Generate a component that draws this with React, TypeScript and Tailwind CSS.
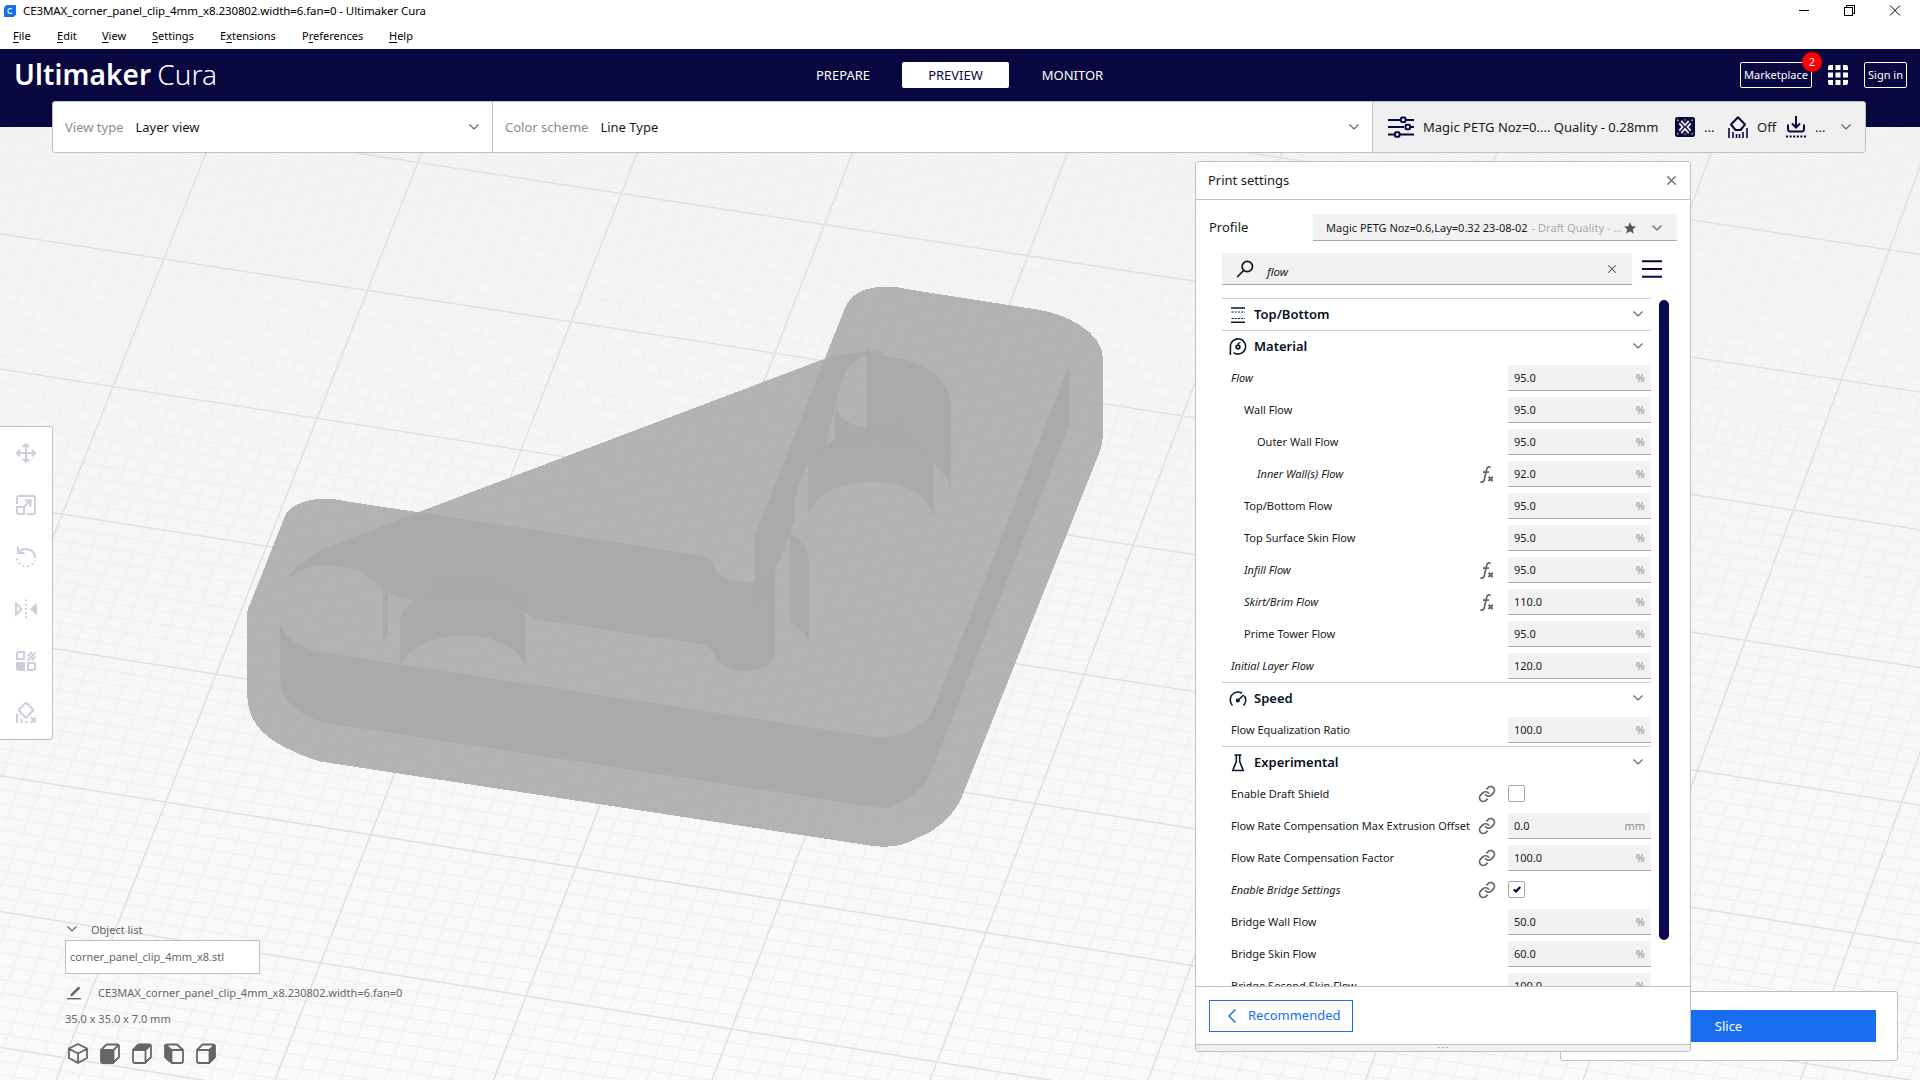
import React from "react";
import { Link } from "lucide-react";

type P = [number, number];

const corner00: P = [163.8, 259];
const corner10: P = [1997, 541.5];
const corner01: P = [-141, 1024.5];
const corner11: P = [1711, 1324.5];

/* Maps build plate coordinates (in 10 mm squares) to the screen. */
function project(i: number, j: number): P {
  const u = i / 9;
  const v = (j - 1) / 6;
  const f = (k: 0 | 1) =>
    corner00[k] * (1 - u) * (1 - v) + corner10[k] * u * (1 - v) + corner01[k] * (1 - u) * v + corner11[k] * u * v;
  return [f(0), f(1)];
}

function gridPath(major: boolean): string {
  let d = "";
  const seg = (a: P, b: P) => {
    d += `M${a[0].toFixed(1)},${a[1].toFixed(1)}L${b[0].toFixed(1)},${b[1].toFixed(1)}`;
  };
  for (let n = -20; n <= 130; n++) {
    if ((n % 10 === 0) === major) seg(project(n / 10, -5), project(n / 10, 10));
  }
  for (let n = -50; n <= 100; n++) {
    if ((n % 10 === 0) === major) seg(project(-2, n / 10), project(13, n / 10));
  }
  return d;
}

const outline =
  "M1135,44 Q1160,42 1180,50 L1405,103 C1460,115 1521,165 1521,232 L1521,425 Q1521,450 1514,480 L1277,1370 Q1262,1430 1218,1470 L1175,1500 Q1148,1512 1115,1504 L155,1284 Q125,1270 98,1249 Q30,1200 30,1110 L30,900 Q30,885 37,865 L96,642 C105,612 135,598 165,598 Q185,598 200,604 L328,633 L1036,232 L1072,98 C1080,65 1105,46 1135,44Z";
const walls = [
  "M87,920 C92,955 115,982 150,997 L1110,1218 C1160,1230 1205,1205 1225,1150 L1462,250 L1462,405 L1222,1310 C1215,1345 1195,1370 1170,1390 C1150,1405 1145,1408 1125,1404 L165,1183 C150,1178 138,1168 125,1157 C100,1135 87,1105 87,1065Z",
  "M98,810 C110,780 135,750 165,728 L328,633 L820,746 C835,751 840,762 842,775 C850,800 870,816 895,815 L915,815 L950,785 L950,1000 C950,1025 925,1049 895,1048 C870,1048 848,1030 841,1000 C836,985 828,981 820,978 L545,915 C530,911 522,903 510,893 Q516,905 516,920 L516,1043 C505,985 460,955 408,955 C355,955 310,985 297,1035 L297,915 C298,895 308,875 321,864 Q307,862 292,854 C285,850 275,842 268,832 L222,782 L180,772 C150,767 118,780 98,810Z",
  "M267,830 L275,838 L275,948 L267,980Z",
  "M1036,232 C1060,218 1100,212 1143,214 L1108,222 C1080,238 1068,270 1060,320 C1055,360 1048,400 1038,455 L1012,490 C1000,530 984,580 984,610 L984,655 L950,785 L915,915 L915,690Z",
  "M1108,203 L1114,212 L1143,214 L1128,222 C1195,230 1256,275 1256,350 L1256,580 C1253,545 1242,525 1226,506 L1226,643 C1215,585 1175,553 1118,553 C1060,553 1015,590 1007,643 L1007,500 L1038,455 L1054,445 L1054,360 C1062,390 1080,410 1108,413Z",
  "M976,690 C998,703 1009,735 1009,765 L1009,980 C1003,950 992,932 976,920Z",
];
const innerWalls = [
  "M1054,360 C1062,390 1085,412 1118,412 C1150,412 1172,395 1180,372 L1180,435 C1205,455 1220,480 1226,506 C1210,475 1170,455 1118,455 C1080,458 1040,470 1007,500 L1038,455 L1054,445Z",
  "M345,765 L345,800 C370,793 440,790 470,805 L470,770 L470,825 L525,845 L510,893 C500,870 480,862 460,868 L345,868 L321,864 L345,850Z",
];

function BuildPlate() {
  return (
    <svg className="absolute inset-0" width="1920" height="1080" viewBox="0 0 1920 1080">
      <defs>
        <linearGradient id="sky" x1="0" y1="0" x2="0" y2="1">
          <stop offset="0" stopColor="#f2f2f2" />
          <stop offset="1" stopColor="#fafafa" />
        </linearGradient>
      </defs>
      <rect width="1920" height="1080" fill="url(#sky)" />
      <path d={gridPath(false)} stroke="#f0f0f0" strokeWidth="1.3" fill="none" />
      <path d={gridPath(true)} stroke="#e0e0e0" strokeWidth="1.5" fill="none" />
      <g transform="matrix(0.57398 0 0 0.38265 230 270)" fill="#a9a9a9" fillOpacity="0.87" shapeRendering="crispEdges">
        <path d={outline} />
        {walls.map((d) => (
          <path key={d} d={d} />
        ))}
        {innerWalls.map((d) => (
          <path key={d} d={d} />
        ))}
      </g>
    </svg>
  );
}

function Chevron({ className = "", color = "#666" }: { className?: string; color?: string }) {
  return (
    <svg className={className} width="10" height="6" viewBox="0 0 10 6" fill="none" stroke={color} strokeWidth="1.2">
      <path d="M0.5 0.5 5 5 9.5 0.5" />
    </svg>
  );
}

function Cross({ size = 8 }: { size?: number }) {
  return (
    <svg width={size} height={size} viewBox="0 0 8 8" stroke="#666" strokeWidth="1.1">
      <path d="M0.3 0.3 7.7 7.7M7.7 0.3 0.3 7.7" />
    </svg>
  );
}

function TitleBar() {
  return (
    <div className="flex h-[22px] items-center justify-between bg-white text-[11.5px] leading-[22px] text-black">
      <div className="flex items-center">
        <svg className="ml-1 mr-[7px]" width="12" height="12" viewBox="0 0 12 12">
          <path d="M2.5 0H12V9.5L9.5 12H0V2.5Z" fill="#196ef0" />
          <path d="M8 4.2C7.2 3.2 3.9 3 3.9 6S7.2 8.8 8 7.8" fill="none" stroke="#fff" strokeWidth="1.1" />
        </svg>
        <span className="tracking-[-0.09px]">CE3MAX_corner_panel_clip_4mm_x8.230802.width=6.fan=0 - Ultimaker Cura</span>
      </div>
      <svg className="mr-[19px] mt-[-2px]" width="102" height="11" viewBox="0 0 102 11" fill="none" stroke="#000" shapeRendering="crispEdges">
        <path d="M0 5.5H10" />
        <path d="M45.5 2.5H53.5V10.5H45.5ZM47.5 2.5V0.5H55.5V8.5H53.5" />
        <path d="M91 0.5 101 10.5M101 0.5 91 10.5" shapeRendering="auto" />
      </svg>
    </div>
  );
}

const menus: [string, string, string, string][] = [
  ["", "F", "ile", "w-[44px]"],
  ["", "E", "dit", "w-[45px]"],
  ["", "V", "iew", "w-[50px]"],
  ["", "S", "ettings", "w-[68px]"],
  ["E", "x", "tensions", "w-[82px]"],
  ["P", "r", "eferences", "w-[87px]"],
  ["", "H", "elp", "w-[40px]"],
];

function MenuBar() {
  return (
    <div className="flex h-[27px] bg-white pl-[13px] text-[11px] leading-[28px] text-black">
      {menus.map(([a, u, b, w]) => (
        <span key={u + b} className={w}>
          {a}
          <span className="underline underline-offset-2">{u}</span>
          {b}
        </span>
      ))}
    </div>
  );
}

function Header() {
  return (
    <div className="relative flex h-[78px] items-start bg-[#08073f] text-white">
      <div className="flex h-[49px] w-[789px] items-center pl-[14px] text-[28px] leading-[48px]">
        <span className="font-semibold tracking-[0.1px]">Ultimaker</span>
        <span className="ml-[6px] font-light">Cura</span>
      </div>
      <div className="mt-[13px] flex h-[26px] text-[13px] leading-[26px]">
        <span className="w-[113px] text-center">
          <span className="ml-[-5px]">PREPARE</span>
        </span>
        <span className="w-[107px] rounded-[2px] bg-white text-center text-[#08073f]">PREVIEW</span>
        <span className="w-[127px] text-center">MONITOR</span>
      </div>
      <div className="ml-auto mr-[13px] mt-[13px] flex h-[26px] items-center text-[11px] leading-[24px]">
        <span className="relative h-[26px] w-[72px] rounded-[2px] border border-white text-center">
          Marketplace
          <span className="absolute -right-[11px] -top-[11px] h-5 w-5 rounded-full bg-[#ff0000] text-center leading-5">2</span>
        </span>
        <svg className="ml-4 mr-4" width="20" height="20" viewBox="0 0 20 20" fill="#fff">
          <path d="M2 0H5V5H0V2Q0 0 2 0M7.5 0H12.5V5H7.5ZM15 0H18Q20 0 20 2V5H15ZM0 7.5H5V12.5H0ZM7.5 7.5H12.5V12.5H7.5ZM15 7.5H20V12.5H15ZM0 15H5V20H2Q0 20 0 18ZM7.5 15H12.5V20H7.5ZM15 15H20V18Q20 20 18 20H15Z" />
        </svg>
        <span className="h-[26px] w-[43px] rounded-[2px] border border-white text-center">Sign in</span>
      </div>
    </div>
  );
}

function Sliders() {
  return (
    <svg width="26" height="22" viewBox="0 0 26 22" fill="none" stroke="#08073f" strokeWidth="2">
      <path d="M0 4H12M18 4H26M0 11H16M22 11H26M0 18.5H6M12 18.5H26" />
      <rect x="13" y="1.5" width="4.5" height="4.5" rx="1" />
      <rect x="17.5" y="8.8" width="4.5" height="4.5" rx="1" />
      <rect x="7" y="16.2" width="4.5" height="4.5" rx="1" />
    </svg>
  );
}

function ConfigBar() {
  return (
    <div className="absolute left-[52px] top-[101px] flex h-[52px] w-[1814px] items-center overflow-hidden rounded-[3px] border border-[#c0c0c0] bg-white text-[13px] text-[#191919]">
      <div className="flex h-full w-[440px] items-center border-r border-[#c0c0c0] pl-3">
        <span className="mt-px text-[#8c8c8c]">View type</span>
        <span className="ml-3 mt-px">Layer view</span>
        <Chevron className="ml-auto mr-[13px]" />
      </div>
      <div className="flex h-full w-[880px] items-center border-r border-[#c0c0c0] pl-3">
        <span className="mt-px text-[#8c8c8c]">Color scheme</span>
        <span className="ml-3 mt-px">Line Type</span>
        <Chevron className="ml-auto mr-[13px]" />
      </div>
      <div className="flex h-full flex-1 items-center bg-[#f0f0f0] pl-[15px]">
        <Sliders />
        <span className="ml-[9px] mt-px w-[252px] whitespace-nowrap">Magic PETG Noz=0.... Quality - 0.28mm</span>
        <svg width="20" height="20" viewBox="0 0 20 20">
          <rect width="20" height="20" rx="2.5" fill="#08073f" />
          <path d="M6.300 3.800 10 8.200 13.700 3.800M6.300 16.200 10 11.800 13.700 16.200" fill="none" stroke="#f0f0f0" strokeWidth="1.800" />
          <path d="M4.300 6.300 7.500 10 4.300 13.700M15.700 6.300 12.500 10 15.700 13.700" fill="none" stroke="#f0f0f0" strokeWidth="1.800" />
          <path d="M2 2.500H3.500V4H2ZM16.500 2.500H18V4H16.500ZM2 16H3.500V17.500H2ZM16.500 16H18V17.500H16.500ZM9.300 2.200H10.700V3.600H9.300ZM9.300 16.400H10.700V17.800H9.300Z" fill="#b9b9c8" />
        </svg>
        <span className="ml-[9px] mt-px w-[24px]">...</span>
        <svg width="20" height="22" viewBox="0 0 20 22" fill="none" stroke="#08073f" strokeWidth="2">
          <path d="M10 1.2 17 8.5 12.5 14H7.5L3 8.5Z" strokeLinejoin="round" />
          <path d="M1 12V22M5 16V22M8.5 18V22M11.5 18V22M15 16V22M19 12V22" strokeWidth="1.6" />
        </svg>
        <span className="ml-[9px] mt-px w-[29px]">Off</span>
        <svg width="20" height="22" viewBox="0 0 20 22" fill="none" stroke="#08073f" strokeWidth="2">
          <path d="M10 0V11M6 7.5 10 11.5 14 7.5M2 8.5V13Q2 15.5 4.5 15.5H15.5Q18 15.5 18 13V8.5" />
          <path d="M0 20.5H20" strokeDasharray="2 1.6" />
        </svg>
        <span className="ml-[9px] mt-px">...</span>
        <Chevron className="ml-auto mr-[14px]" />
      </div>
    </div>
  );
}

function ToolIcons() {
  const base = { width: 20, height: 20, viewBox: "0 0 20 20", fill: "none", stroke: "#cfcddc", strokeWidth: 2 };
  return (
    <>
      <svg {...base}>
        <path d="M10 1V19M1 10H19M6.8 4 10 1 13.2 4M6.8 16 10 19 13.2 16M4 6.8 1 10 4 13.2M16 6.8 19 10 16 13.2" />
      </svg>
      <svg {...base}>
        <path d="M1 9V3Q1 1 3 1H17Q19 1 19 3V17Q19 19 17 19H11M1 12H8V19H3Q1 19 1 17ZM8 12 15 5M9 5.5H14.5V12" />
      </svg>
      <svg {...base}>
        <path d="M2 0V6H8.5M2.5 5.8C7 -0.5 19 1.5 19 11" />
        <path d="M1 11.5C2 21.5 17 22 18.5 13" strokeDasharray="1.8 3" />
      </svg>
      <svg {...base} width={22} viewBox="0 0 22 20">
        <path d="M1 4.5V15.5L6.5 10Z" />
        <path d="M22 3.5V16.5L15 10Z" fill="#cfcddc" stroke="none" />
        <path d="M11 0.5V20" strokeDasharray="1.8 2.4" />
      </svg>
      <svg {...base}>
        <path d="M3 1H8V8H1V3Q1 1 3 1M12 12H19V17Q19 19 17 19H12ZM11.5 5.5 16 0.8M11.5 9.5 19.5 1.5M15.5 9.5 19.5 5.5" />
        <path d="M0 11H9V20H3Q0 20 0 17Z" fill="#cfcddc" stroke="none" />
      </svg>
      <svg {...base} className="-mt-px" height={21} viewBox="0 0 20 21">
        <path d="M10 1Q10.500 1 11 1.500L17 7.500Q17.500 8 17 8.500L11 15Q10 16 9 15L3 8.500Q2.500 8 3 7.500L9 1.500Q9.500 1 10 1" />
        <path d="M1 11.500V21M5.500 17V21M10 19V21M15 15.500 20 20.500M20 15.500 15 20.500" />
      </svg>
    </>
  );
}

function Toolbar() {
  return (
    <div className="absolute -left-[3px] top-[426px] flex h-[314px] w-[56px] flex-col items-center rounded-[3px] border border-[#c0c0c0] bg-white">
      <div className="grid auto-rows-[52px] place-items-center pl-[1px]">
        <ToolIcons />
      </div>
    </div>
  );
}

const viewFaces = [
  "",
  "M1 6H14V20H1Z",
  "M1 6 6 1H19L14 6Z",
  "M1 1 7 6V19H5L1 15Z",
  "M14 6 19 1V15L14 20Z",
];

function ViewIcon({ index }: { index: number }) {
  return (
    <svg width="20" height="21" viewBox="0 0 20 21" fill="none" stroke="#666" strokeWidth="2" strokeLinejoin="round">
      {index === 0 ? (
        <path d="M10 1 19 5.500V15L10 20 1 15V5.500ZM1.500 6 10 10.500 18.500 6M10 10.500V20" strokeWidth="1.800" />
      ) : (
        <>
          <path d={viewFaces[index]} fill="#666" stroke="none" />
          {index === 3 ? (
            <path d="M19 7V18Q19 20 17 20H8L1 14V2L3 1.500H13L19 7H7.500V20M1.500 2 7.500 7" strokeWidth="1.800" />
          ) : (
            <path d="M1 7V18Q1 20 3 20H13L19 14V3Q19 1.500 17 1.500H6.500L1 7H13.500V20M13.500 7 18.500 2" strokeWidth="1.800" />
          )}
        </>
      )}
    </svg>
  );
}

function ObjectList() {
  return (
    <div className="absolute left-[65px] top-[920px] flex w-[400px] flex-col text-[11px] text-[#666]">
      <div className="flex h-5 items-center">
        <Chevron className="ml-[2px] mr-[14px] mt-[-3px]" />
        Object list
      </div>
      <div className="h-[34px] w-[195px] border border-[#c0c0c0] bg-white pl-1 leading-[32px]">corner_panel_clip_4mm_x8.stl</div>
      <div className="mt-[9px] flex h-5 items-center">
        <svg className="ml-[2px] mr-[17px]" width="14" height="14" viewBox="0 0 14 14" fill="#666">
          <path d="M11.500 0.500 13.300 2.200 6 9.500 3.500 10.500 3.800 8Z" />
          <path d="M0 12H14V13.400H0Z" />
        </svg>
        CE3MAX_corner_panel_clip_4mm_x8.230802.width=6.fan=0
      </div>
      <div className="mt-[6px] h-5 leading-5">35.0 x 35.0 x 7.0 mm</div>
      <div className="ml-[3px] mt-[14px] flex gap-3">
        {viewFaces.map((_, i) => (
          <ViewIcon key={i} index={i} />
        ))}
      </div>
    </div>
  );
}

type Row =
  | { kind: "cat"; name: string }
  | { kind: "set"; name: string; level?: number; italic?: boolean; icon?: "fx" | "link"; value?: string; unit?: string; check?: boolean };

const rows: Row[] = [
  { kind: "cat", name: "Top/Bottom" },
  { kind: "cat", name: "Material" },
  { kind: "set", name: "Flow", italic: true, value: "95.0" },
  { kind: "set", name: "Wall Flow", level: 1, value: "95.0" },
  { kind: "set", name: "Outer Wall Flow", level: 2, value: "95.0" },
  { kind: "set", name: "Inner Wall(s) Flow", level: 2, italic: true, icon: "fx", value: "92.0" },
  { kind: "set", name: "Top/Bottom Flow", level: 1, value: "95.0" },
  { kind: "set", name: "Top Surface Skin Flow", level: 1, value: "95.0" },
  { kind: "set", name: "Infill Flow", level: 1, italic: true, icon: "fx", value: "95.0" },
  { kind: "set", name: "Skirt/Brim Flow", level: 1, italic: true, icon: "fx", value: "110.0" },
  { kind: "set", name: "Prime Tower Flow", level: 1, value: "95.0" },
  { kind: "set", name: "Initial Layer Flow", italic: true, value: "120.0" },
  { kind: "cat", name: "Speed" },
  { kind: "set", name: "Flow Equalization Ratio", value: "100.0" },
  { kind: "cat", name: "Experimental" },
  { kind: "set", name: "Enable Draft Shield", icon: "link", check: false },
  { kind: "set", name: "Flow Rate Compensation Max Extrusion Offset", icon: "link", value: "0.0", unit: "mm" },
  { kind: "set", name: "Flow Rate Compensation Factor", icon: "link", value: "100.0" },
  { kind: "set", name: "Enable Bridge Settings", italic: true, icon: "link", check: true },
  { kind: "set", name: "Bridge Wall Flow", value: "50.0" },
  { kind: "set", name: "Bridge Skin Flow", value: "60.0" },
  { kind: "set", name: "Bridge Second Skin Flow", value: "100.0" },
];

function CategoryIcon({ name }: { name: string }) {
  const ink = "#0b1a2b";
  return (
    <svg width="18" height="18" viewBox="0 0 18 18" fill="none" stroke={ink} strokeWidth="1.6">
      {name === "Top/Bottom" && (
        <>
          <path d="M2 2H16M2 16.200H16" />
          <path d="M2.500 6H16M2.500 12.500H16" strokeDasharray="2 1.200" strokeWidth="1.200" />
        </>
      )}
      {name === "Material" && (
        <>
          <path d="M1.400 17V8.500A7.600 7.600 0 1 1 4.500 14.600" />
          <circle cx="9" cy="9" r="1.800" strokeWidth="1.800" />
          <path d="M8.500 5.800C9.500 5.800 9.800 4.400 11.500 4.600" strokeWidth="1.300" />
        </>
      )}
      {name === "Speed" && (
        <>
          <path d="M3.500 15.500A7.700 7.700 0 0 1 1.300 10M1.300 10A7.700 7.700 0 0 1 13 3.200M15.300 5.800A7.700 7.700 0 0 1 14.500 15.500" />
          <path d="M9 10.500 14.500 5" />
          <circle cx="8.800" cy="10.500" r="1.300" fill={ink} />
        </>
      )}
      {name === "Experimental" && <path d="M5.500 1H12.500M7.300 1V7.500L3.800 16.500H14.200L10.700 7.500V1" />}
    </svg>
  );
}

function FxIcon() {
  return (
    <svg width="14" height="17" viewBox="0 0 14 17" fill="none" stroke="#666">
      <path d="M10.500 1.500C8.500 0 7 1.500 6.500 4L4.300 13.500C3.800 16 2 17 0.500 15.500M3 6.200H9" strokeWidth="1.700" />
      <path d="M8.500 10.700 12.800 15M12.800 10.700 8.500 15" strokeWidth="2" />
    </svg>
  );
}

const indents = ["pl-[9px]", "pl-[22px]", "pl-[35px]"];

function SettingRow({ row }: { row: Row }) {
  if (row.kind === "cat") {
    return (
      <div className="flex h-8 shrink-0 items-center border-t border-[#d0d0d0] pl-[7px] text-[13px] font-semibold text-[#08101c]">
        <CategoryIcon name={row.name} />
        <span className="ml-[7px] mt-px">{row.name}</span>
        <Chevron className="ml-auto mr-2 mt-[-2px]" />
      </div>
    );
  }
  return (
    <div className={"flex h-8 shrink-0 items-center text-[11px] text-[#191919] " + indents[row.level ?? 0]}>
      <span className={"mt-px flex-1 whitespace-nowrap " + (row.italic ? "italic" : "")}>{row.name}</span>
      <span className="flex w-4 shrink-0 justify-center">
        {row.icon === "fx" && <FxIcon />}
        {row.icon === "link" && <Link className="shrink-0" size={18} color="#666" strokeWidth={2.3} />}
      </span>
      {row.check === undefined ? (
        <span className="ml-[13px] flex h-[26px] w-[143px] shrink-0 items-center justify-between border-b border-[#a8a8a8] bg-[#f2f2f2] px-[6px] pt-px">
          <span>{row.value}</span>
          <span className="text-[#8c8c8c]">{row.unit ?? "%"}</span>
        </span>
      ) : (
        <span className="ml-[13px] flex w-[143px] shrink-0">
          <span className="mt-[-1px] flex h-[17px] w-[17px] items-center justify-center rounded-[2px] border border-[#a8a8a8]">
            {row.check && (
              <svg width="8" height="7" viewBox="0 0 8 7" fill="none" stroke="#08073f" strokeWidth="2.200">
                <path d="M0.800 3.500 3 5.500 7.200 1" />
              </svg>
            )}
          </span>
        </span>
      )}
    </div>
  );
}

function SettingsPanel() {
  return (
    <div className="absolute left-[1195px] top-[161px] flex h-[891px] w-[496px] flex-col overflow-hidden rounded-[3px] border border-[#c0c0c0] bg-white text-[#191919]">
      <div className="flex h-[38px] shrink-0 items-center justify-between border-b border-[#c0c0c0] pl-3 pr-[14px] text-[13px]">
        Print settings
        <Cross size={9} />
      </div>
      <div className="mt-[14px] flex h-[27px] shrink-0 items-center pl-[13px] text-[13px]">
        <span className="w-[104px]">Profile</span>
        <div className="flex h-[27px] w-[364px] items-center border-b border-[#a8a8a8] bg-[#f2f2f2] pl-[13px] pt-[2px] text-[11px]">
          <span className="whitespace-pre">Magic PETG Noz=0.6,Lay=0.32 23-08-02</span>
          <span className="ml-1 whitespace-pre text-[#aaa]">- Draft Quality - ...</span>
          <svg className="ml-auto" width="12" height="12" viewBox="0 0 12 12" fill="#555">
            <path d="M6 0 7.700 4.200 12 4.500 8.700 7.300 9.800 11.700 6 9.300 2.200 11.700 3.300 7.300 0 4.500 4.300 4.200Z" />
          </svg>
          <Chevron className="ml-4 mr-[15px]" />
        </div>
      </div>
      <div className="ml-[26px] mt-3 flex h-8 shrink-0 items-center">
        <div className="flex h-8 w-[410px] items-center border-b border-[#a8a8a8] bg-[#f2f2f2] pl-[14px] text-[11.5px] italic">
          <svg width="18" height="18" viewBox="0 0 18 18" fill="none" stroke="#191919" strokeWidth="1.700">
            <circle cx="11.300" cy="6.500" r="5.200" />
            <path d="M7.700 10.300 1.200 17" />
          </svg>
          <span className="ml-[13px] mt-[7px]">flow</span>
          <span className="ml-auto mr-[16px]">
            <Cross />
          </span>
        </div>
        <svg className="ml-[10px] mt-[-1px]" width="20" height="18" viewBox="0 0 20 18" stroke="#08073f" strokeWidth="2">
          <path d="M0 1.300H20M0 9H20M0 16.700H20" />
        </svg>
      </div>
      <div className="ml-[26px] mt-[13px] flex min-h-0 flex-1 overflow-hidden">
        <div className="flex w-[429px] flex-col">
          {rows.map((r) => (
            <SettingRow key={r.name} row={r} />
          ))}
        </div>
        <div className="ml-2 mt-[2px] h-[640px] w-[10px] rounded-full bg-[#0a0850]" />
      </div>
      <div className="flex h-[58px] shrink-0 items-center border-t border-[#c0c0c0] pl-[13px]">
        <div className="flex h-8 w-[144px] items-center border border-[#196ef0] pl-[18px] text-[13px] text-[#196ef0]">
          <svg width="8" height="14" viewBox="0 0 8 14" fill="none" stroke="#196ef0" strokeWidth="1.500">
            <path d="M7.500 0.500 1 7 7.500 13.500" />
          </svg>
          <span className="ml-[12px]">Recommended</span>
        </div>
      </div>
      <div className="flex h-[7px] shrink-0 items-start justify-center gap-[2px] border-t border-[#c0c0c0] bg-[#f0f0f0] pt-[2px]">
        {[0, 1, 2].map((n) => (
          <span key={n} className="h-px w-[2px] bg-[#b0b0b0]" />
        ))}
      </div>
    </div>
  );
}

export default function App() {
  return (
    <div className="relative h-[1080px] w-[1920px] overflow-hidden font-['Noto_Sans',sans-serif]">
      <BuildPlate />
      <div className="relative">
        <TitleBar />
        <MenuBar />
        <Header />
      </div>
      <ConfigBar />
      <Toolbar />
      <ObjectList />
      <div className="absolute left-[1560px] top-[991px] h-[70px] w-[338px] rounded-[3px] border border-[#c0c0c0] bg-white pl-[19px] pr-[21px] pt-[18px]">
        <div className="h-8 bg-[#196ef0] pl-px text-center text-[13px] leading-[33px] text-white">Slice</div>
      </div>
      <SettingsPanel />
    </div>
  );
}
